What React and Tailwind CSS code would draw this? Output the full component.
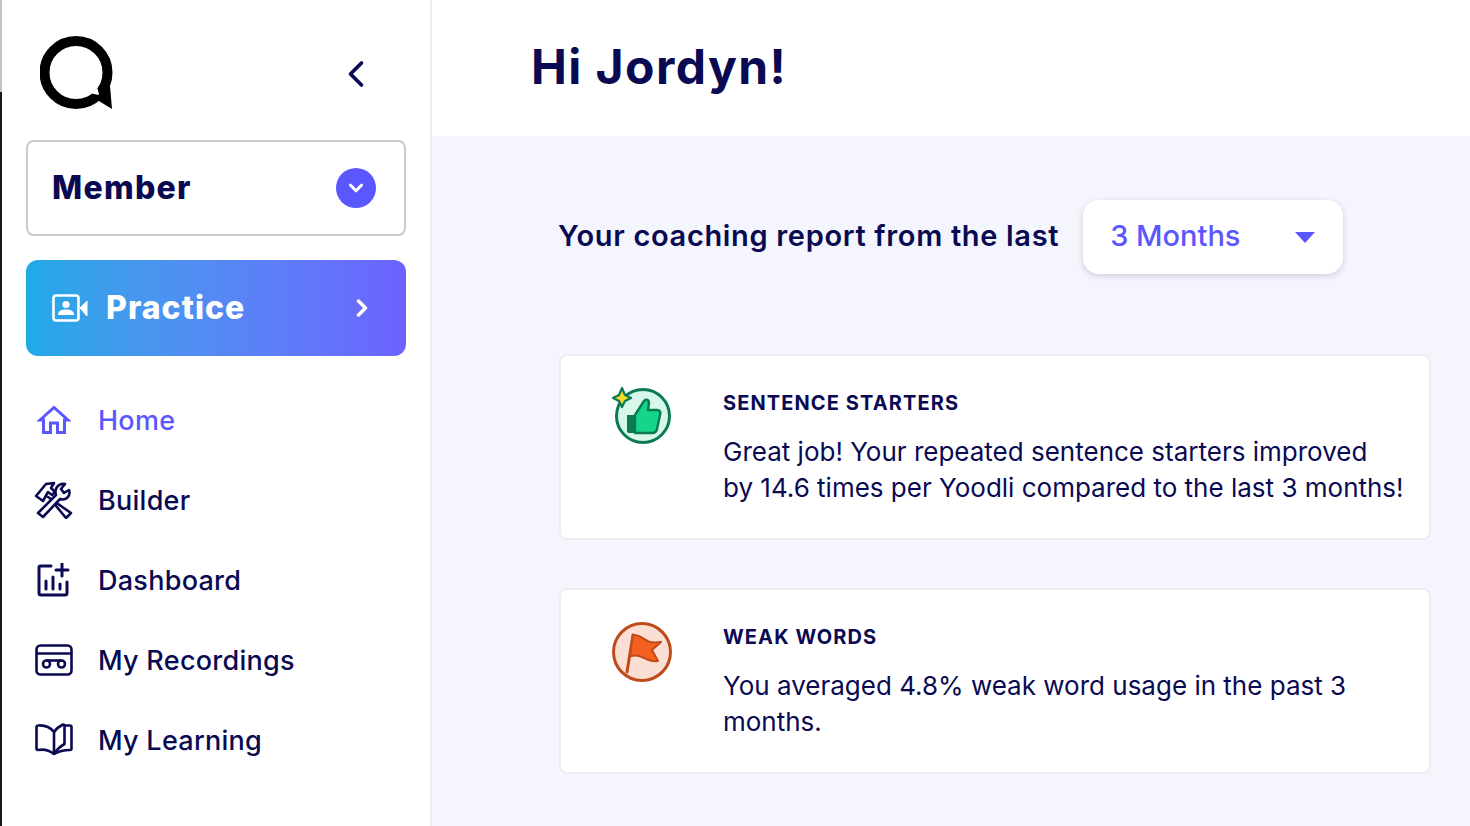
import { ChevronDown, ChevronLeft, ChevronRight } from "lucide-react";

const font = { fontFamily: "Inter" };

const LogoMark = () => (
  <svg width="74" height="76" viewBox="0 0 74 76" fill="none">
    <circle cx="36" cy="36.5" r="31.5" stroke="#000" strokeWidth="10" />
    <path d="M54 62 L72 73 L70 50 Z" fill="#000" />
    <path d="M51.5 57.5 L59 59 L57.5 52 Z" fill="#fff" />
  </svg>
);

const HomeIcon = () => (
  <svg width="34" height="30" viewBox="0 0 34 30" fill="none" stroke="#5a57ff" strokeWidth="3" strokeLinejoin="miter">
    <path d="M3 15 L17 2.5 L31 15 H27.5 V27.5 H20.5 V18 H13.5 V27.5 H6.5 V15 Z" />
  </svg>
);

const ToolsIcon = () => (
  <svg width="40" height="38" viewBox="0 0 40 38" fill="none" stroke="#0a0a52" strokeWidth="2.6" strokeLinejoin="round" strokeLinecap="round">
    <path d="M2 15 L12 3 L20 2 L17 7 L21 11 L18 14 L14 11 L9 20 Z" />
    <path d="M14 16 L37 32 L32 37 L18 20" />
    <path d="M4 32 L22 14 C20 8 24 2 31 3 L27 8 L30 12 L35 9 C37 15 32 20 26 18 L9 36 Z" fill="#fff" />
  </svg>
);

const DashboardIcon = () => (
  <svg width="34" height="34" viewBox="0 0 34 34" fill="none" stroke="#0a0a52" strokeWidth="3" strokeLinecap="round">
    <path d="M14 3 H3.5 A1.5 1.5 0 0 0 2 4.5 V30 A2 2 0 0 0 4 32 H28 A2 2 0 0 0 30 30 V19" />
    <path d="M25 1 V13 M19 7 H31" />
    <path d="M9 18 V26 M16 14 V26 M23 21 V26" />
  </svg>
);

const RecordingsIcon = () => (
  <svg width="38" height="32" viewBox="0 0 38 32" fill="none" stroke="#0a0a52" strokeWidth="2.6">
    <rect x="1.5" y="1.5" width="35" height="29" rx="4" />
    <path d="M1.5 9.5 H36.5" />
    <circle cx="11.5" cy="20" r="3.5" />
    <circle cx="26.5" cy="20" r="3.5" />
    <path d="M11.5 16.5 H26.5" />
  </svg>
);

const BookIcon = () => (
  <svg width="38" height="34" viewBox="0 0 38 34" fill="none" stroke="#0a0a52" strokeWidth="2.6" strokeLinejoin="round">
    <path d="M19 31 C14 27 8 26 3 27 A1.5 1.5 0 0 1 1.5 25.5 V4 A1.5 1.5 0 0 1 3 2.5 C9 2 15 4 19 9 V31 Z" />
    <path d="M19 31 C24 28 30 27 35 27 A1.5 1.5 0 0 0 36.5 25.5 V4 C36.5 3 35.5 2.5 34.5 2.5 H29" />
    <path d="M19 9 C21 6 25 3 28 1.5 C29 1.5 29.5 2 29.5 3 V21 C26 23 22 26 19 31" />
  </svg>
);

const PracticeIcon = () => (
  <svg width="36" height="28" viewBox="0 0 36 28" fill="none">
    <rect x="1.5" y="1.5" width="25" height="25" rx="2.5" stroke="#fff" strokeWidth="2.6" />
    <circle cx="14" cy="10.5" r="3.6" fill="#fff" />
    <path d="M6 21 C6 16.5 10 15.5 14 15.5 C18 15.5 22 16.5 22 21 Z" fill="#fff" />
    <path d="M28 14 L35 7 V22 Z" fill="#fff" stroke="#fff" strokeWidth="1" strokeLinejoin="round" />
  </svg>
);

const ThumbBadge = () => (
  <svg width="62" height="58" viewBox="0 0 62 58" fill="none">
    <circle cx="32" cy="30" r="26.5" fill="#d6f7ea" stroke="#0a7a50" strokeWidth="3" />
    <path d="M16 29 H24 V47 H18 A2 2 0 0 1 16 45 Z" fill="#0a7a50" />
    <path d="M24 29 L33 15 C34 13 38 13 38 17 L37 24 H46 C49 24 50 26 49 29 L46 43 C45.5 46 44 47 41 47 H24 Z" fill="#16d58a" stroke="#0a7a50" strokeWidth="2.4" strokeLinejoin="round" />
    <path d="M11 2 L14 9 L20 12 L14 15 L11 21 L8 15 L2 12 L8 9 Z" fill="#f6d92a" stroke="#0a7a50" strokeWidth="2.2" strokeLinejoin="round" />
  </svg>
);

const FlagBadge = () => (
  <svg width="60" height="60" viewBox="0 0 60 60" fill="none">
    <circle cx="30" cy="30" r="28.5" fill="#fcdfd4" stroke="#c04a1a" strokeWidth="3" />
    <path d="M15 50 L21 13" stroke="#c04a1a" strokeWidth="3" strokeLinecap="round" />
    <path d="M21 13 C28 12 33 19 38 20 C42 21 46 20 49 20 L40 28 L46 39 C38 41 32 35 27 34 C24 33 21 34 18 34 Z" fill="#f4611e" stroke="#c04a1a" strokeWidth="2" strokeLinejoin="round" />
  </svg>
);

const navItems = [
  { label: "Home", icon: <HomeIcon />, active: true },
  { label: "Builder", icon: <ToolsIcon /> },
  { label: "Dashboard", icon: <DashboardIcon /> },
  { label: "My Recordings", icon: <RecordingsIcon /> },
  { label: "My Learning", icon: <BookIcon /> },
];

const cards = [
  {
    title: "SENTENCE STARTERS",
    icon: <ThumbBadge />,
    iconClass: "pt-[30px]",
    lines: ["Great job! Your repeated sentence starters improved", "by 14.6 times per Yoodli compared to the last 3 months!"],
  },
  {
    title: "WEAK WORDS",
    icon: <FlagBadge />,
    iconClass: "pt-[32px]",
    lines: ["You averaged 4.8% weak word usage in the past 3", "months."],
  },
];

const Sidebar = () => (
  <aside className="flex w-[430px] shrink-0 flex-col border-r-2 border-[#eceef4] bg-white">
    <div className="flex h-[140px] items-start justify-between pl-[38px] pr-[52px] pt-[36px]">
      <LogoMark />
      <ChevronLeft size={44} strokeWidth={2} className="mt-[16px] text-[#0a0a52]" />
    </div>

    <div className="ml-[24px] flex h-[96px] w-[380px] items-center justify-between rounded-lg border-2 border-[#c8ccd1] pl-[24px] pr-[28px]">
      <span className="text-[32px] font-extrabold tracking-[0.04em] text-[#0a0a52]">Member</span>
      <span className="flex h-10 w-10 items-center justify-center rounded-full bg-[#5a57ff]">
        <ChevronDown size={22} strokeWidth={3.4} className="text-white" />
      </span>
    </div>

    <div className="ml-[24px] mt-[24px] flex h-[96px] w-[380px] items-center rounded-xl bg-gradient-to-r from-[#1eaae6] to-[#6c62ff] pl-[26px] pr-[30px]">
      <PracticeIcon />
      <span className="ml-[18px] text-[32px] font-extrabold tracking-[0.032em] text-white">Practice</span>
      <ChevronRight size={28} strokeWidth={3} className="ml-auto text-white" />
    </div>

    <nav className="mt-[24px] flex flex-col">
      {navItems.map((item) => (
        <div key={item.label} className="flex h-[80px] items-center">
          <span className="flex w-[96px] justify-center pl-[16px] pr-[8px]">{item.icon}</span>
          <span className={`pt-[2px] text-[27px] font-medium tracking-[0.01em] ${item.active ? "text-[#5a57ff]" : "text-[#0a0a52]"}`}>{item.label}</span>
        </div>
      ))}
    </nav>
  </aside>
);

const ReportCard = ({ card }) => (
  <div className="flex h-[186px] rounded-lg border-2 border-[#eceef4] bg-white">
    <div className={`flex w-[162px] justify-center pl-[26px] pr-[26px] ${card.iconClass}`}>{card.icon}</div>
    <div className="pt-[33px]">
      <h3 className="text-[20px] font-bold leading-[28px] tracking-[0.055em] text-[#0a0a52]">{card.title}</h3>
      <p className="mt-[17px] text-[26px] leading-[36px] text-[#0a0a52]">
        {card.lines.map((line) => (
          <span key={line} className="block whitespace-nowrap">
            {line}
          </span>
        ))}
      </p>
    </div>
  </div>
);

export default function App() {
  return (
    <div className="flex h-[826px] w-[1470px] overflow-hidden bg-white" style={font}>
      <div className="flex w-[2px] shrink-0 flex-col">
        <div className="h-[92px] bg-[#c4c4c4]" />
        <div className="flex-1 bg-[#1a1a12]" />
      </div>
      <Sidebar />
      <main className="flex min-w-0 flex-1 flex-col bg-[#f4f5fd]">
        <header className="flex h-[136px] shrink-0 items-center bg-white pb-[3px] pl-[99px]">
          <h1 className="text-[48px] font-bold tracking-[0.03em] text-[#0a0a52]">Hi Jordyn!</h1>
        </header>
        <div className="pl-[127px] pr-[39px] pt-[64px]">
          <div className="-ml-px flex items-center">
            <span className="whitespace-nowrap pb-[2px] text-[29px] font-semibold tracking-[0.023em] text-[#0a0a52]">Your coaching report from the last</span>
            <div className="ml-[24px] flex h-[74px] w-[260px] items-center justify-between rounded-2xl bg-white pl-[27px] pr-[28px] shadow-[0_2px_6px_rgba(40,40,80,0.18)]">
              <span className="pb-[2px] text-[29px] font-medium text-[#5a57ff]">3 Months</span>
              <span className="h-0 w-0 border-x-[10px] border-t-[11px] border-x-transparent border-t-[#5a57ff]" />
            </div>
          </div>
          <div className="mt-[80px] flex flex-col gap-[48px]">
            {cards.map((card) => (
              <ReportCard key={card.title} card={card} />
            ))}
          </div>
        </div>
      </main>
    </div>
  );
}
